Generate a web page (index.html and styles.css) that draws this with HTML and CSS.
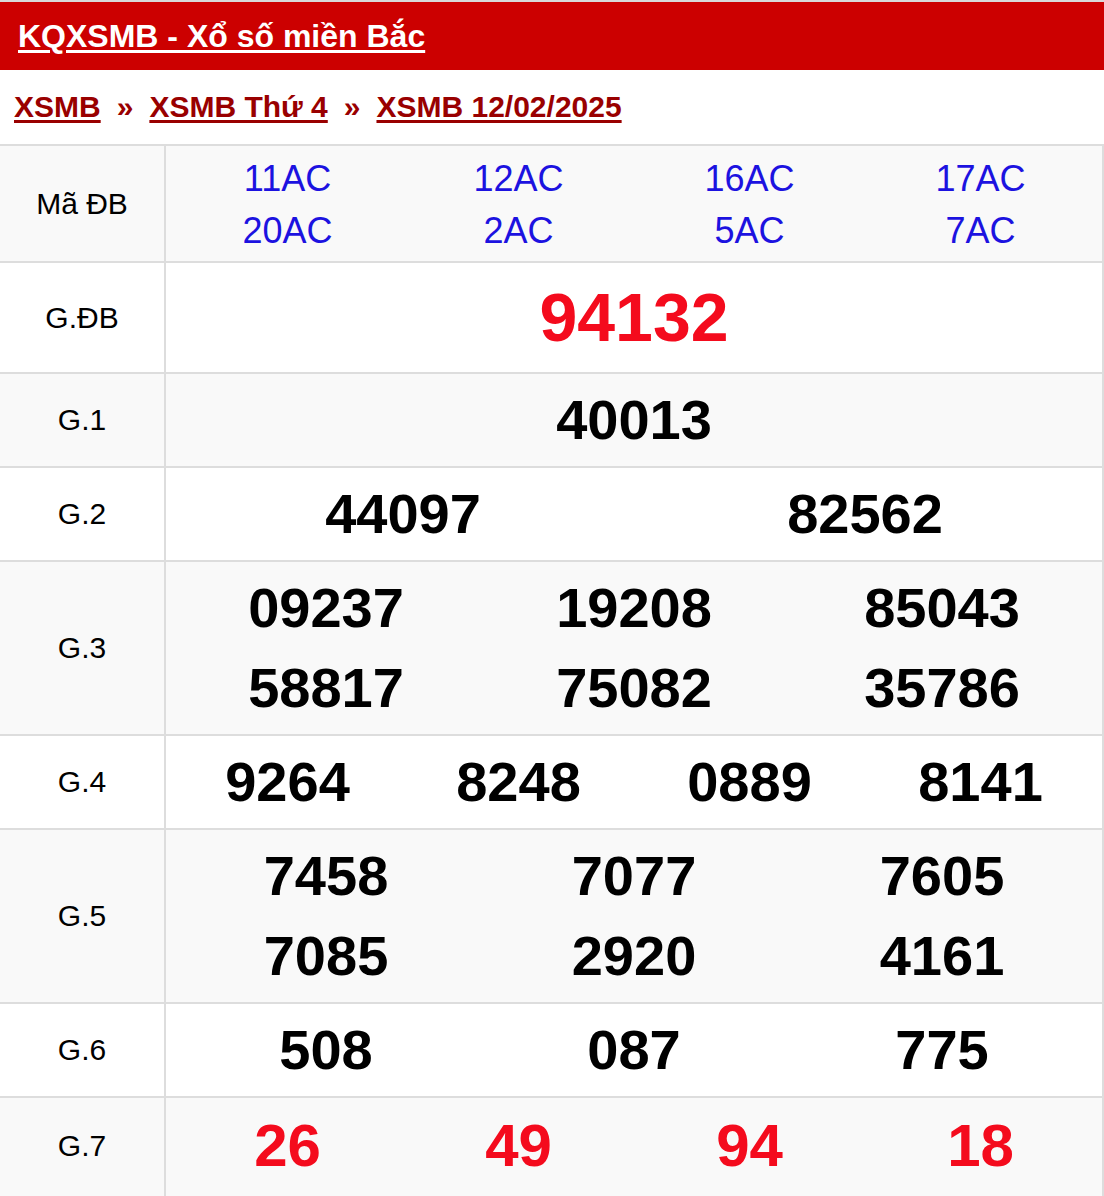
FILE: index.html
```html
<!DOCTYPE html>
<html lang="vi">
<head>
<meta charset="utf-8">
<title>KQXSMB - Xổ số miền Bắc</title>
<link rel="stylesheet" href="styles.css">
</head>
<body>
<div class="title-bar"><a class="title-link" href="#">KQXSMB - Xổ số miền Bắc</a></div>
<div class="crumbs">
  <a class="crumb" href="#">XSMB</a><span class="sep">»</span><a class="crumb" href="#">XSMB Thứ 4</a><span class="sep">»</span><a class="crumb" href="#">XSMB 12/02/2025</a>
</div>
<table class="kq">
  <tr class="alt">
    <td class="lbl">Mã ĐB</td>
    <td class="val codes">
      <div class="g g4">
        <span>11AC</span><span>12AC</span><span>16AC</span><span>17AC</span>
        <span>20AC</span><span>2AC</span><span>5AC</span><span>7AC</span>
      </div>
    </td>
  </tr>
  <tr>
    <td class="lbl">G.ĐB</td>
    <td class="val"><div class="g g1 db"><span>94132</span></div></td>
  </tr>
  <tr class="alt">
    <td class="lbl">G.1</td>
    <td class="val"><div class="g g1"><span>40013</span></div></td>
  </tr>
  <tr>
    <td class="lbl">G.2</td>
    <td class="val"><div class="g g2"><span>44097</span><span>82562</span></div></td>
  </tr>
  <tr class="alt">
    <td class="lbl">G.3</td>
    <td class="val"><div class="g g3"><span>09237</span><span>19208</span><span>85043</span><span>58817</span><span>75082</span><span>35786</span></div></td>
  </tr>
  <tr>
    <td class="lbl">G.4</td>
    <td class="val"><div class="g g4"><span>9264</span><span>8248</span><span>0889</span><span>8141</span></div></td>
  </tr>
  <tr class="alt">
    <td class="lbl">G.5</td>
    <td class="val"><div class="g g3"><span>7458</span><span>7077</span><span>7605</span><span>7085</span><span>2920</span><span>4161</span></div></td>
  </tr>
  <tr>
    <td class="lbl">G.6</td>
    <td class="val"><div class="g g3"><span>508</span><span>087</span><span>775</span></div></td>
  </tr>
  <tr class="alt last">
    <td class="lbl">G.7</td>
    <td class="val"><div class="g g4 red"><span>26</span><span>49</span><span>94</span><span>18</span></div></td>
  </tr>
</table>
</body>
</html>
```

FILE: styles.css
```css
html, body {
  margin: 0;
  padding: 0;
  background: #ffffff;
  font-family: "Liberation Sans", Arial, Helvetica, sans-serif;
}
.title-bar {
  border-top: 2px solid #d9d9d9;
  background: #cc0000;
  height: 68px;
  line-height: 68px;
  padding-left: 18px;
}
.title-link {
  color: #ffffff;
  font-weight: bold;
  font-size: 32px;
  text-decoration: underline;
  text-decoration-thickness: 3px;
  text-underline-offset: 3px;
}
.crumbs {
  height: 74px;
  line-height: 73px;
  padding-left: 14px;
  font-size: 30px;
  font-weight: bold;
  color: #990000;
}
.crumb {
  color: #990000;
  text-decoration: underline;
  text-decoration-thickness: 3px;
  text-underline-offset: 3px;
}
.sep {
  margin: 0 16px;
}
.kq {
  width: 1104px;
  border-collapse: collapse;
  table-layout: fixed;
}
.kq td {
  border: 2px solid #dddddd;
  padding: 6px;
  text-align: center;
  vertical-align: middle;
}
.kq td.lbl {
  border-left: 0;
  width: 152px;
  font-size: 30px;
  color: #000000;
}
.kq tr.alt td {
  background: #f9f9f9;
}
.kq tr.last td {
  padding-top: 8px;
  padding-bottom: 16px;
  vertical-align: top;
}
.kq tr.last td.lbl {
  line-height: 80px;
}
.g {
  display: grid;
  font-size: 56px;
  font-weight: bold;
  line-height: 80px;
  color: #000000;
}
.g1 { grid-template-columns: 1fr; }
.g2 { grid-template-columns: repeat(2, 1fr); }
.g3 { grid-template-columns: repeat(3, 1fr); }
.g4 { grid-template-columns: repeat(4, 1fr); }
.db {
  font-size: 68px;
  line-height: 97px;
  color: #f40b1d;
}
.red {
  font-size: 60px;
  color: #f40b1d;
}
.kq td.codes {
  padding: 7px 6px 4px 6px;
}
.codes .g {
  font-size: 36px;
  font-weight: normal;
  line-height: 52px;
  color: #1c12e0;
}
```
